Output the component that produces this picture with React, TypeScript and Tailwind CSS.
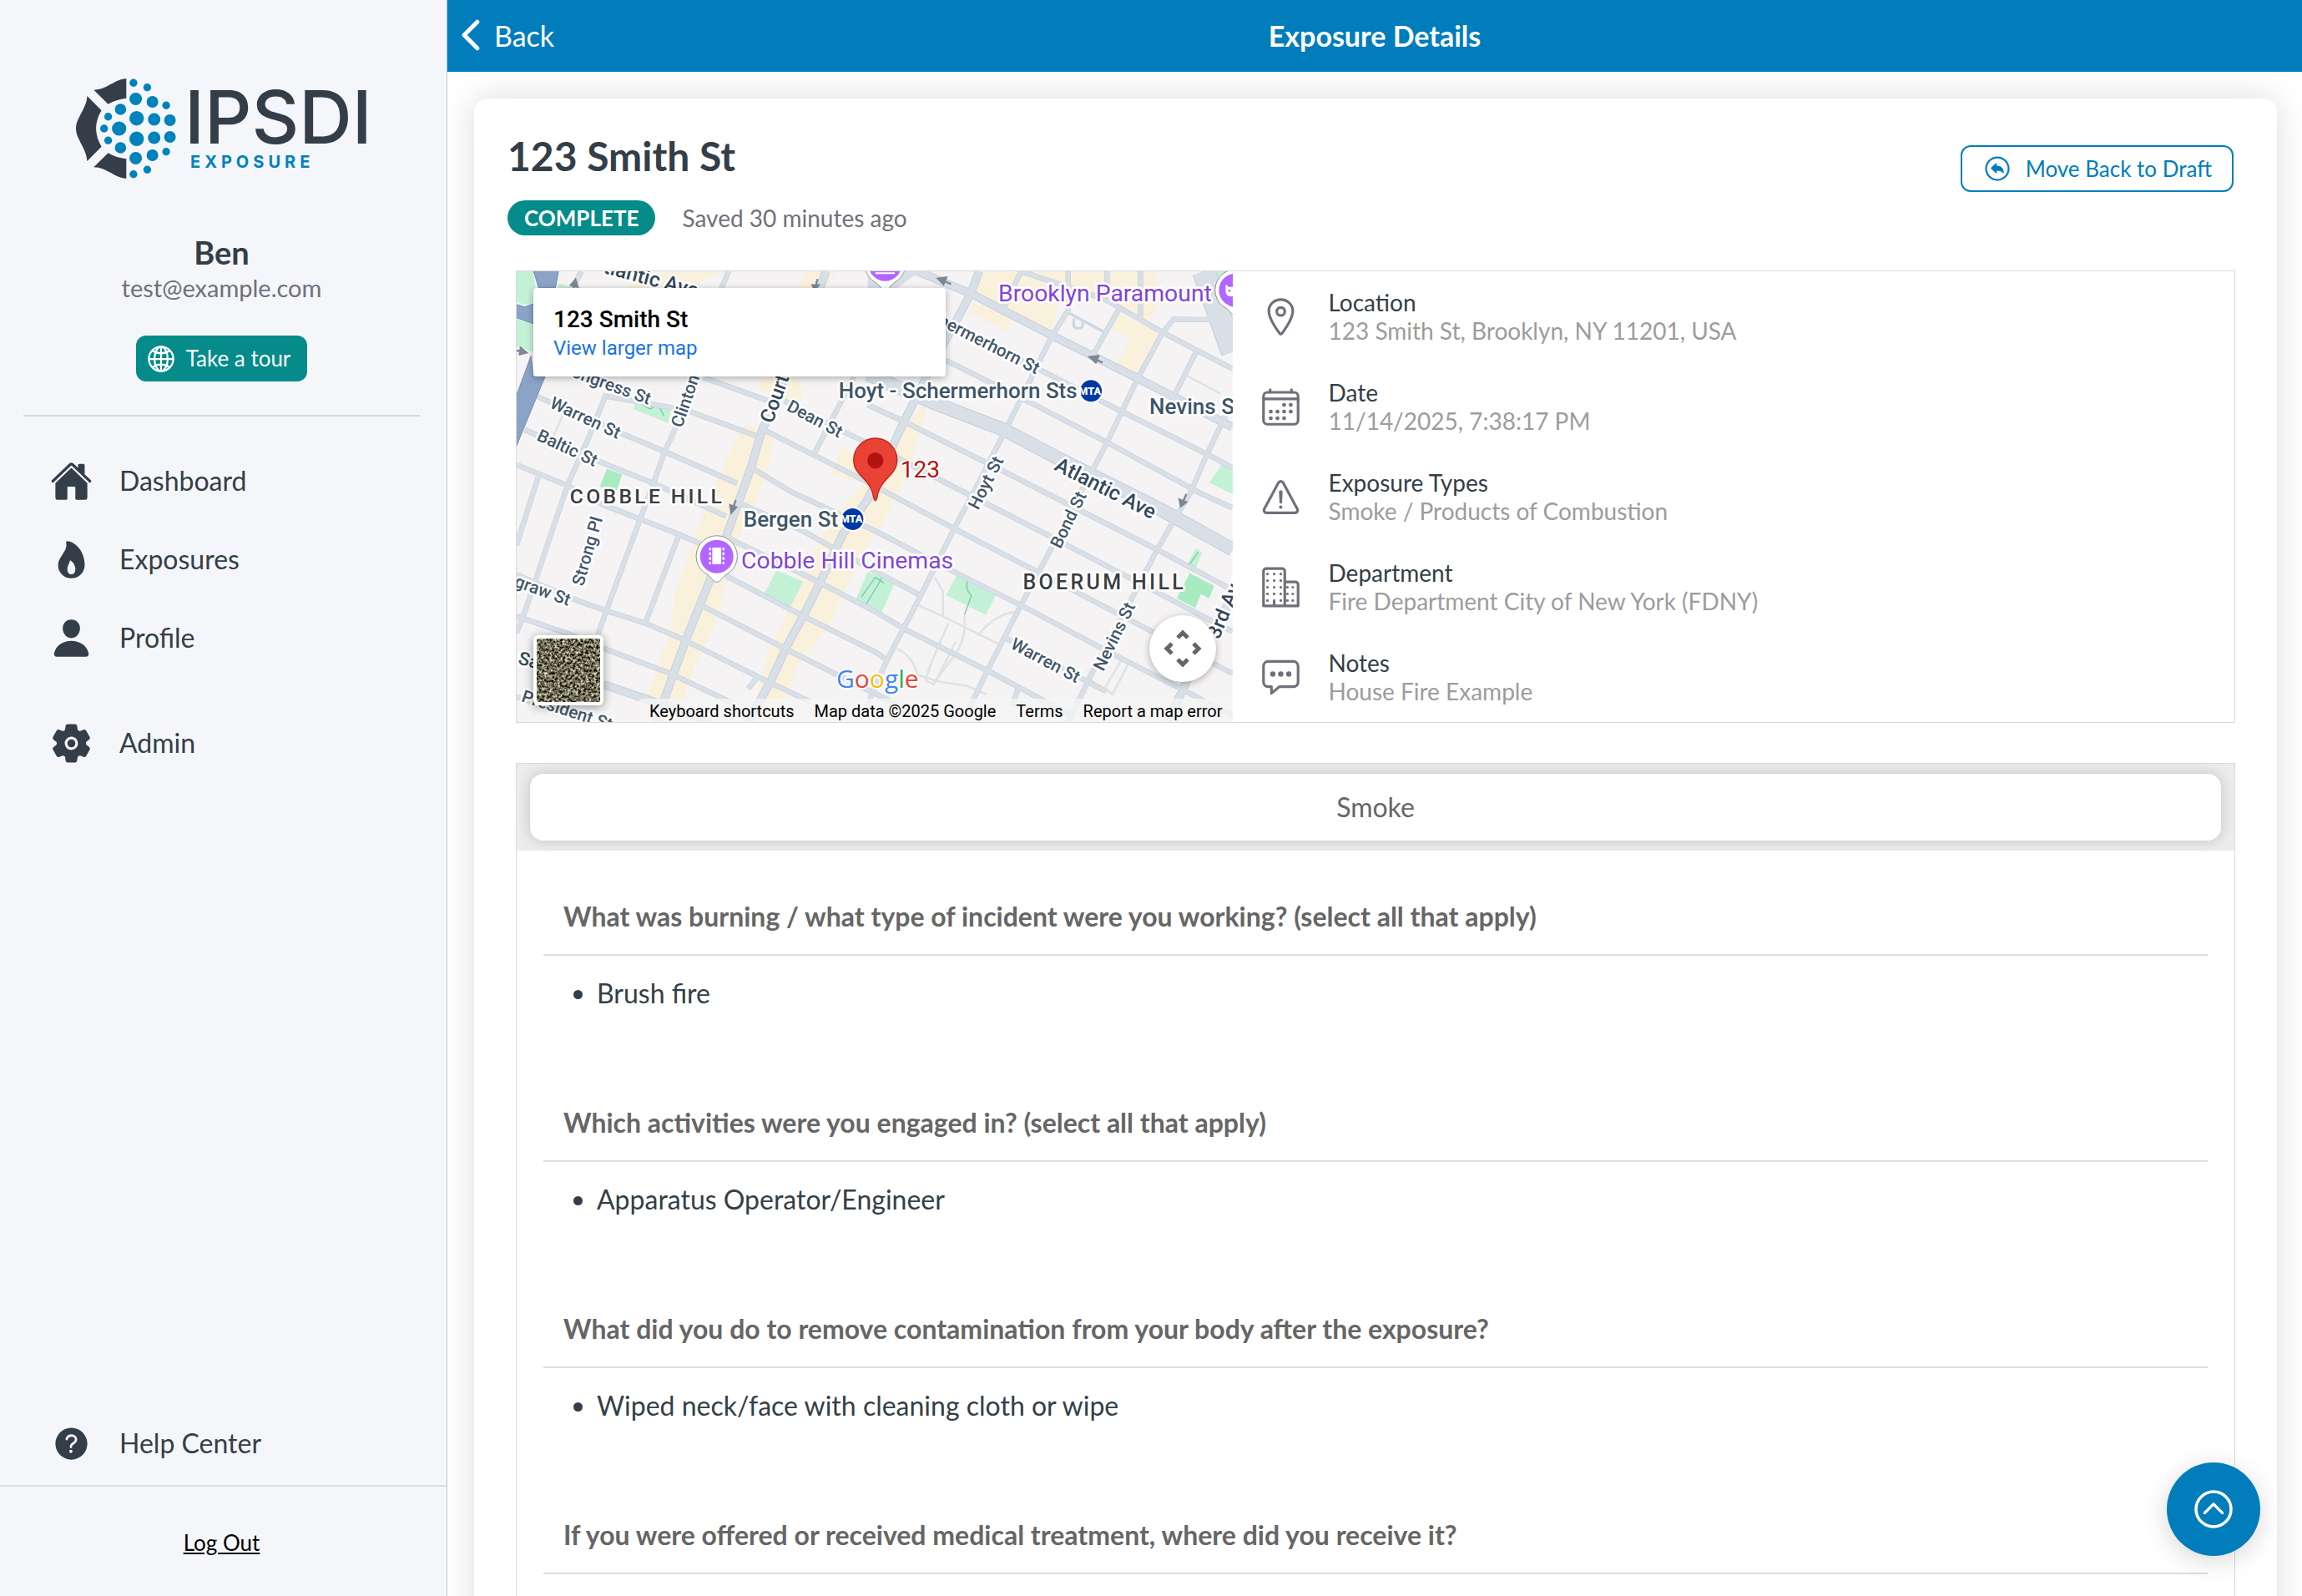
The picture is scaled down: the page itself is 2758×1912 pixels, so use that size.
import type { ReactNode } from 'react';
import type { IconType } from 'react-icons';
import {
  IoArrowUndoCircleOutline,
  IoBusinessOutline,
  IoCalendarOutline,
  IoChatboxEllipsesOutline,
  IoChevronBack,
  IoChevronUpCircleOutline,
  IoFlame,
  IoGlobeOutline,
  IoHelpCircle,
  IoHome,
  IoLocationOutline,
  IoPerson,
  IoSettings,
  IoWarningOutline,
} from 'react-icons/io5';

const mainLinks = [
  { name: 'Dashboard', href: '#dashboard', icon: IoHome },
  { name: 'Exposures', href: '#exposures', icon: IoFlame },
  { name: 'Profile', href: '#profile', icon: IoPerson },
];

const details = [
  { label: 'Location', value: '123 Smith St, Brooklyn, NY 11201, USA', icon: IoLocationOutline },
  { label: 'Date', value: '11/14/2025, 7:38:17 PM', icon: IoCalendarOutline },
  { label: 'Exposure Types', value: 'Smoke / Products of Combustion', icon: IoWarningOutline },
  { label: 'Department', value: 'Fire Department City of New York (FDNY)', icon: IoBusinessOutline },
  { label: 'Notes', value: 'House Fire Example', icon: IoChatboxEllipsesOutline },
];

const questions = [
  {
    text: 'What was burning / what type of incident were you working? (select all that apply)',
    answers: ['Brush fire'],
  },
  {
    text: 'Which activities were you engaged in? (select all that apply)',
    answers: ['Apparatus Operator/Engineer'],
  },
  {
    text: 'What did you do to remove contamination from your body after the exposure?',
    answers: ['Wiped neck/face with cleaning cloth or wipe'],
  },
  {
    text: 'If you were offered or received medical treatment, where did you receive it?',
    answers: [],
  },
];

// [cx, cy, r], the lower half is mirrored
const logoDots = [
  [68.9, 5.3, 4.7],
  [85.4, 10.7, 4.7],
  [71.6, 24.5, 7.5],
  [91.6, 28, 7],
  [108.1, 32.3, 4.7],
  [53.4, 37, 6.8],
  [72.7, 47.7, 8.7],
  [38.6, 45.7, 4.7],
  [93.7, 49, 7.5],
  [112.6, 50, 7],
];

function Logo() {
  return (
    <svg viewBox="0 0 350 120" className="h-[120px] w-[350px] overflow-visible" role="img" aria-label="IPSDI Exposure">
      <g fill="#343e48">
        <path d="M60.3 0V23.7Q48 25 38.6 30.7L21.3 13.7C37 13.5 45 1.5 60.3 0Z" />
        <path d="M60.3 120V96.3Q48 95 38.6 89.3L21.3 106.3C37 106.5 45 118.5 60.3 120Z" />
        <path d="M13.4 21L30.6 38.3Q17.6 60 30.6 81.7L13.4 99C13 84 0 73 0 60C0 47 13 36 13.4 21Z" />
      </g>
      <g fill="#0082ba">
        {logoDots.map(([x, y, r]) => (
          <g key={`${x}-${y}`}>
            <circle cx={x} cy={y} r={r} />
            <circle cx={x} cy={120 - y} r={r} />
          </g>
        ))}
        <circle cx="33.7" cy="60" r="4.7" />
        <circle cx="51.7" cy="60" r="8.6" />
      </g>
      <text x="130" y="78" fill="#343e48" className="font-['Inter',sans-serif] text-[88px] font-medium">
        IPSDI
      </text>
      <text x="137" y="107" fill="#0082ba" className="font-['Inter',sans-serif] text-[20px] font-bold tracking-[5px]">
        EXPOSURE
      </text>
    </svg>
  );
}

function NavLink({ name, href, icon: Icon }: { name: string; href: string; icon: IconType }) {
  return (
    <a href={href} className="flex h-[94px] items-center gap-8 pl-[60px] text-[32px] text-[#343e48]">
      <Icon size={51} />
      {name}
    </a>
  );
}

const localRoads = [
  // running down to the right
  'M673 382L903 465',
  'M963 465L1193 585L1293 632L1913 950L2573 1295',
  'M70 448L383 585L533 648L793 762',
  'M318 448L613 500L863 592',
  'M893 572L1068 660L1263 758L1573 925L1873 1080L2573 1445',
  'M843 705L983 790L1293 935L1513 1050L1813 1200L2123 1365L2573 1595',
  'M30 570L313 690L493 762L753 880',
  'M793 830L1033 935L1293 1080L1453 1165',
  'M0 695L183 770L313 840L443 890L583 945L663 980L763 1100L1023 1235L1293 1370L1328 1395',
  'M753 955L1083 1115L1293 1225L1393 1285L1693 1435L2003 1600',
  'M0 1090L223 1185L323 1220L463 1265L593 1320L903 1475L1053 1545',
  'M663 1200L973 1360L1273 1510L1453 1600',
  'M0 1240L193 1305L313 1355L563 1450L773 1550',
  'M1753 1315L2053 1475L2120 1510',
  'M1263 480L1393 540L1743 715L2303 1000L2573 1145',
  'M1543 320L1863 480L2123 615L2463 800L2573 850',
  'M1463 150L1903 365L2178 505L2478 655L2573 705',
  'M1813 0L2113 100L2323 220L2573 350',
  'M0 1530L200 1600',
  // running down to the left
  'M233 0L203 60',
  'M763 0L733 70',
  'M673 330L573 560L533 648L493 760L443 895L323 1220L293 1305',
  'M323 440L263 590L183 770L23 1245L0 1300',
  'M78 740L0 985',
  'M583 950L463 1265',
  'M1213 380L1068 660',
  'M1983 0V140L1923 235L1813 460L1743 600L1643 795L1573 925L1453 1165L1393 1280L1333 1395L1243 1600',
  'M2573 175L2363 172L2323 220L2233 385L2123 615L1883 1070L1813 1200L1693 1435L1623 1580',
  'M2573 470L2483 655L2423 795L2363 895L2303 1000L2223 1155L2063 1455L1983 1620',
  'M2443 290L2363 450',
  'M2163 140L2073 300',
  'M1813 0L1753 130',
  'M2123 0V80',
  'M2243 0L2243 170',
  'M873 1450L833 1500',
  'M1803 1500L1783 1560',
];

const mainRoads = [
  'M1113 0L973 370L883 570L843 705L753 955L693 1115L613 1315L563 1450L503 1620',
  'M1663 0L1633 80L1493 340L1393 540L1263 820L1173 945L1093 1115L1033 1235L973 1345L913 1475L833 1620',
  'M1440 0L1633 80L1923 230L2233 385L2573 560',
  'M313 1485L473 1540L700 1620',
  'M2573 1170L2500 1300L2413 1465L2340 1620',
];

const paths = [
  'M1503 1100L1533 1150V1240',
  'M1443 1200L1533 1240L1743 1345',
  'M1658 1310Q1720 1230 1793 1225',
  'M1368 1355Q1430 1390 1440 1450L1520 1475L1620 1490L1690 1520',
  'M1553 1265Q1490 1400 1470 1470L1500 1485L1580 1330',
  'M1610 1240Q1620 1330 1560 1400L1500 1480',
  'M2173 1400L2113 1500L2143 1520L2200 1410',
  'M2063 1470L2143 1520',
  'M130 600L170 510',
  'M2400 370L2530 440',
];

function StreetLabel({ x, y, angle, size = 62, color = '#42566b', children }: {
  x: number;
  y: number;
  angle: number;
  size?: number;
  color?: string;
  children: ReactNode;
}) {
  return (
    <text
      transform={`translate(${x} ${y}) rotate(${angle})`}
      fontSize={size}
      fontWeight={500}
      fill={color}
      stroke="#fff"
      strokeWidth={16}
      strokeLinejoin="round"
      paintOrder="stroke"
    >
      {children}
    </text>
  );
}

function TransitBadge({ x, y }: { x: number; y: number }) {
  return (
    <g>
      <circle cx={x} cy={y} r={45} fill="#fff" />
      <circle cx={x} cy={y} r={39} fill="#0039a6" />
      <text x={x - 4} y={y + 13} textAnchor="middle" fontSize={38} fontWeight={900} fill="#fff">
        MTA
      </text>
    </g>
  );
}

function MapPoi({ x, y, children }: { x: number; y: number; children?: ReactNode }) {
  return (
    <g transform={`translate(${x} ${y})`}>
      <path
        d="M0 92C-12 92 -18 78 -32 66A74 74 0 1 1 32 66C18 78 12 92 0 92Z"
        fill="#fff"
        stroke="#8a8f98"
        strokeWidth={3}
      />
      <circle r={60} fill="#b366ff" />
      {children}
    </g>
  );
}

function StreetMap() {
  return (
    <svg
      viewBox="0 0 2574 1620"
      preserveAspectRatio="xMidYMid slice"
      className="absolute inset-0 h-full w-full font-['Roboto',sans-serif]"
      aria-label="Map of 123 Smith St"
    >
      <rect width="2574" height="1620" fill="#f5f3f4" />

      {/* Commercial blocks */}
      <g fill="#f9f1dc">
        <path d="M520 0H740L620 60H390Z" />
        <path d="M1040 0H1150L1100 70H1010Z" />
        <path d="M890 370H1010L1030 460L980 470L870 420Z" />
        <path d="M820 550L925 590L910 690L860 830L800 960L760 1090L710 1280L640 1420L570 1620H440L500 1440L550 1300L570 1150L640 960L700 800L750 680Z" />
        <path d="M1170 630L1290 700L1390 560L1480 470L1420 690L1330 880L1200 1100L1120 1280L1010 1420L940 1620H840L900 1380L970 1230L1040 1060L1150 870L1250 760L1130 730Z" />
        <path d="M1680 0H2300V140L2260 180L2120 110L1960 80L1920 220L1650 90Z" />
        <path d="M1640 110L1780 160L1765 215L1630 150Z" />
        <path d="M2160 150L2310 220L2230 370L2160 330L2205 240L2130 200Z" />
      </g>

      {/* Parks */}
      <g fill="#c3f1d5">
        <path d="M0 0H60L75 110L30 120L0 110Z" />
        <path d="M0 170L60 190V290L0 270Z" />
        <path d="M150 45L215 60L205 80H150Z" />
        <path d="M430 465L555 500L545 545L420 495Z" />
        <path d="M325 710L380 730L360 790L300 775Z" fill="#a8ebc1" />
        <path d="M935 1075L1030 1115L985 1205L890 1160Z" />
        <path d="M1263 1080L1360 1120L1310 1230L1220 1180Z" />
        <path d="M1583 1090L1723 1165L1687 1235L1545 1165Z" />
        <path d="M2443 995L2465 1010L2440 1070L2410 1055Z" />
        <path d="M2420 1085L2508 1130L2490 1175L2460 1160L2440 1210L2373 1175Z" fill="#a8ebc1" />
        <path d="M2535 695L2574 710V800L2490 760Z" />
        <path d="M2490 0H2574V40L2520 50Z" />
      </g>
      <path d="M435 470L480 495L510 480L530 520M1255 1200L1315 1100M1240 1170L1290 1100L1320 1120M1623 1110Q1610 1140 1635 1165L1610 1235M2415 1060L2450 1010" fill="none" stroke="#7cc9b0" strokeWidth={4} />

      {/* Side streets, casing first */}
      <g fill="none" strokeLinejoin="round">
        {paths.map((d) => (
          <path key={d} d={d} stroke="#dfe3e5" strokeWidth={8} />
        ))}
        {localRoads.map((d) => (
          <path key={d} d={d} stroke="#c6d1db" strokeWidth={19} />
        ))}
        {mainRoads.map((d) => (
          <path key={d} d={d} stroke="#c0cdd8" strokeWidth={30} />
        ))}
        <path d="M2470 0L2574 290" stroke="#c0cdd8" strokeWidth={84} />
        <path d="M1263 370L1493 470L1753 570L1943 670L2323 860L2574 1000" stroke="#c0cdd8" strokeWidth={50} />
        {localRoads.map((d) => (
          <path key={d} d={d} stroke="#d8dfe7" strokeWidth={15} />
        ))}
        {mainRoads.map((d) => (
          <path key={d} d={d} stroke="#d8dfe7" strokeWidth={25} />
        ))}
        <path d="M2470 0L2574 290" stroke="#d8dfe7" strokeWidth={78} />
        <path d="M1263 370L1493 470L1753 570L1943 670L2323 860L2574 1000" stroke="#d8dfe7" strokeWidth={44} />
        <path d="M1263 0L1450 0L1330 90L1263 60" stroke="none" fill="#d8dfe7" />
        <path d="M1985 150L2115 220M2005 170Q1995 205 2020 205Q2040 205 2035 180" stroke="#cdd8e2" strokeWidth={10} />
      </g>

      {/* Expressway */}
      <g fill="#8ba3c6" stroke="#6f8db8" strokeWidth={3}>
        <path d="M60 -5H152L140 60H80Z" />
        <path d="M-5 118L30 128L65 115V190L-5 165Z" />
        <path d="M-5 460L52 305L60 378H103L-5 640Z" />
      </g>

      {/* One-way arrows */}
      <g fill="#7d8794" stroke="#7d8794" strokeWidth={7}>
        <path d="M1525 30L1562 46M1515 26L1545 22L1535 46Z" />
        <path d="M2070 312L2107 328M2060 308L2092 304L2082 328Z" />
        <path d="M788 822L778 855M768 840L790 848L772 868Z" />
        <path d="M2408 800L2395 830M2383 820L2407 830L2388 845Z" />
        <path d="M205 60L212 40M195 50L212 30L220 56Z" />
        <path d="M0 285L30 290M15 275L36 292L12 298Z" />
        <path d="M1082 28L1074 60M1064 50H1086L1072 66Z" />
      </g>

      <StreetLabel x={310} y={5} angle={15} size={74} color="#33475b">tlantic Ave</StreetLabel>
      <StreetLabel x={195} y={378} angle={20}>ongress St</StreetLabel>
      <StreetLabel x={116} y={488} angle={25}>Warren St</StreetLabel>
      <StreetLabel x={70} y={605} angle={25}>Baltic St</StreetLabel>
      <StreetLabel x={595} y={565} angle={-71}>Clinton St</StreetLabel>
      <StreetLabel x={920} y={550} angle={-70} size={72} color="#33475b">Court St</StreetLabel>
      <StreetLabel x={968} y={498} angle={28}>Dean St</StreetLabel>
      <StreetLabel x={1512} y={190} angle={27}>hermerhorn St</StreetLabel>
      <StreetLabel x={1660} y={860} angle={-63}>Hoyt St</StreetLabel>
      <StreetLabel x={1955} y={1000} angle={-64}>Bond St</StreetLabel>
      <StreetLabel x={1930} y={712} angle={27} size={74} color="#33475b">Atlantic Ave</StreetLabel>
      <StreetLabel x={240} y={1134} angle={-74}>Strong Pl</StreetLabel>
      <StreetLabel x={-42} y={1120} angle={20}>egraw St</StreetLabel>
      <StreetLabel x={3} y={1410} angle={15} size={66} color="#33475b">Sackett</StreetLabel>
      <StreetLabel x={15} y={1545} angle={18}>President St</StreetLabel>
      <StreetLabel x={1772} y={1353} angle={28}>Warren St</StreetLabel>
      <StreetLabel x={2110} y={1440} angle={-64}>Nevins St</StreetLabel>
      <StreetLabel x={2525} y={1325} angle={-67} size={72} color="#33475b">3rd Ave</StreetLabel>

      <StreetLabel x={192} y={833} angle={0} size={74} color="#3a3d42">
        <tspan letterSpacing={10}>COBBLE HILL</tspan>
      </StreetLabel>
      <StreetLabel x={1820} y={1142} angle={0} size={75} color="#3a3d42">
        <tspan letterSpacing={10}>BOERUM HILL</tspan>
      </StreetLabel>
      <StreetLabel x={1158} y={455} angle={0} size={78} color="#3d5569">Hoyt - Schermerhorn Sts</StreetLabel>
      <StreetLabel x={2275} y={512} angle={0} size={78} color="#3d5569">Nevins St</StreetLabel>
      <StreetLabel x={816} y={917} angle={0} size={78} color="#3d5569">Bergen St</StreetLabel>
      <TransitBadge x={2065} y={430} />
      <TransitBadge x={1208} y={891} />

      <g fontSize={85} fill="#8344d8" stroke="#fff" strokeWidth={16} strokeLinejoin="round" paintOrder="stroke">
        <text x={1732} y={108}>Brooklyn Paramount</text>
        <text x={808} y={1067}>Cobble Hill Cinemas</text>
      </g>
      <MapPoi x={720} y={1025}>
        <path d="M-24 -32V28M24 -32V28" stroke="#fff" strokeWidth={7} strokeDasharray="10 7" />
        <rect x={-16} y={-32} width={32} height={60} fill="#fff" />
      </MapPoi>
      <MapPoi x={1325} y={-25}>
        <path d="M-28 20H28M-35 32H35" stroke="#fff" strokeWidth={6} />
      </MapPoi>
      <MapPoi x={2585} y={68}>
        <path d="M-36 -20L-24 -12H0V22H-18Q-36 22 -36 0Z" fill="#fff" />
        <circle cx={-22} cy={2} r={4} fill="#b366ff" />
      </MapPoi>

      <path
        d="M1290 824C1284 824 1284 812 1280 796C1268 744 1212 734 1212 678A78 78 0 0 1 1368 678C1368 734 1312 744 1300 796C1296 812 1296 824 1290 824Z"
        fill="#ea4335"
        stroke="#c5221f"
        strokeWidth={4}
      />
      <circle cx={1290} cy={680} r={29} fill="#b31412" />
      <text x={1380} y={740} fontSize={84} fill="#b31412" stroke="#fff" strokeWidth={12} strokeLinejoin="round" paintOrder="stroke">
        123
      </text>
    </svg>
  );
}

function SatelliteThumb() {
  return (
    <svg viewBox="0 0 76 76" className="h-full w-full" aria-hidden="true">
      <filter id="aerial" x="0" y="0" width="100%" height="100%" colorInterpolationFilters="sRGB">
        <feTurbulence type="fractalNoise" baseFrequency="0.32" numOctaves="4" seed="7" />
        <feColorMatrix
          type="matrix"
          values="1.7 0 0 0 -0.42  1.7 0 0 0 -0.43  1.6 0 0 0 -0.46  0 0 0 0 1"
        />
      </filter>
      <rect width="76" height="76" filter="url(#aerial)" />
    </svg>
  );
}

function MapPanel() {
  return (
    <div className="relative col-span-5 h-[540px] overflow-hidden">
      <StreetMap />

      {/* Place card */}
      <div className="absolute top-5 left-5 h-[106px] w-[494px] rounded-sm bg-white px-6 pt-[22px] font-['Roboto',sans-serif] shadow-[0_2px_8px_rgba(0,0,0,0.3)]">
        <p className="text-[28px] leading-8 font-medium text-black">123 Smith St</p>
        <a href="#larger-map" className="block text-2xl leading-9 text-[#1a73e8]">
          View larger map
        </a>
      </div>

      <button
        aria-label="Show satellite imagery"
        className="absolute bottom-5 left-5 size-[84px] overflow-hidden rounded-md border-4 border-white shadow-[0_2px_12px_rgba(0,0,0,0.4)]"
      >
        <SatelliteThumb />
      </button>

      <button
        aria-label="Map camera controls"
        className="absolute right-5 bottom-12 flex size-20 items-center justify-center rounded-full bg-white shadow-[0_2px_8px_rgba(0,0,0,0.3)]"
      >
        <svg viewBox="0 0 48 48" className="size-12" fill="none" stroke="#666" strokeWidth="5">
          <path d="M18 11L24 5L30 11M18 37L24 43L30 37M11 18L5 24L11 30M37 18L43 24L37 30" />
        </svg>
      </button>

      <svg viewBox="0 0 96 40" className="absolute bottom-7 left-[383px] h-10 w-24 overflow-visible" aria-label="Google">
        <text
          x="0"
          y="27"
          fontSize="30"
          stroke="#fff"
          strokeWidth="4"
          strokeLinejoin="round"
          paintOrder="stroke"
          className="font-['Open_Sans',sans-serif] font-medium"
        >
          <tspan fill="#4285f4">G</tspan>
          <tspan fill="#ea4335">o</tspan>
          <tspan fill="#fbbc04">o</tspan>
          <tspan fill="#4285f4">g</tspan>
          <tspan fill="#34a853">l</tspan>
          <tspan fill="#ea4335">e</tspan>
        </text>
      </svg>

      <div className="absolute right-0 bottom-0 flex h-7 items-center gap-6 bg-[#f5f5f5]/75 px-3 pt-[2px] font-['Roboto',sans-serif] text-xl text-black">
        <button>Keyboard shortcuts</button>
        <span>Map data ©2025 Google</span>
        <a href="#terms">Terms</a>
        <a href="#report">Report a map error</a>
      </div>
    </div>
  );
}

function Sidebar() {
  return (
    <aside className="flex w-[536px] shrink-0 flex-col border-r border-[#c3c5c9] bg-[#f4f6fa]">
      <div className="flex flex-col items-center pt-[94px] pr-8 pl-7">
        <Logo />
        <h2 className="mt-[66px] text-[38px] leading-[44px] font-bold text-[#343e48]">Ben</h2>
        <p className="text-[29px] leading-[42px] text-[#6f707a]">test@example.com</p>
        <button className="mt-9 flex h-[55px] items-center gap-3 rounded-xl bg-[#048b8a] pr-5 pl-3 text-[26px] text-white">
          <IoGlobeOutline size={36} />
          Take a tour
        </button>
      </div>
      <hr className="mt-10 mr-8 ml-7 border-t-2 border-[#d5d7da]" />

      <nav className="mt-[30px] flex flex-col">
        {mainLinks.map((link) => (
          <NavLink key={link.name} {...link} />
        ))}
        <div className="mt-8">
          <NavLink name="Admin" href="#admin" icon={IoSettings} />
        </div>
      </nav>

      <div className="mt-auto mb-[3px]">
        <NavLink name="Help Center" href="#help" icon={IoHelpCircle} />
      </div>
      <div className="flex h-[133px] items-center justify-center border-t-2 border-[#dcdedf] pt-1 pr-1">
        <button className="text-[26px] text-black underline">Log Out</button>
      </div>
    </aside>
  );
}

export default function App() {
  return (
    <div className="flex h-screen overflow-hidden bg-white font-['Lato',sans-serif]">
      <Sidebar />

      <main className="flex min-w-0 flex-1 flex-col">
        <header className="grid h-[86px] shrink-0 grid-cols-3 items-center bg-[#007dba] pb-[2px] text-[34px] text-white">
          <button className="flex items-center justify-self-start">
            <IoChevronBack size={56} />
            Back
          </button>
          <h1 className="text-center font-bold">Exposure Details</h1>
        </header>

        <div className="min-h-0 flex-1 overflow-hidden pt-8 pr-[30px] pl-8">
          <div className="rounded-2xl bg-white px-[50px] pt-10 shadow-[0_0_40px_rgba(0,0,0,0.14)]">
            {/* TITLE ROW */}
            <div className="-ml-[10px] flex items-start justify-between">
              <div>
                <h2 className="text-5xl leading-[58px] font-bold text-[#343e48]">123 Smith St</h2>
                <div className="mt-6 flex items-center gap-8">
                  <span className="flex h-[42px] items-center rounded-full bg-[#048b8a] px-5 text-[26px] font-bold text-white">
                    COMPLETE
                  </span>
                  <span className="text-[28px] leading-[42px] text-[#6f707a]">Saved 30 minutes ago</span>
                </div>
              </div>
              <button className="mt-4 mr-[2px] flex h-14 items-center gap-4 rounded-xl border-2 border-[#007dba] px-6 text-[26px] text-[#007dba]">
                <IoArrowUndoCircleOutline size={36} />
                Move Back to Draft
              </button>
            </div>

            {/* MAP + DETAILS */}
            <section className="mt-[42px] grid grid-cols-12 border border-[#d9dbdc]">
              <MapPanel />
              <dl className="col-span-7 flex flex-col pl-8">
                {details.map(({ label, value, icon: Icon }) => (
                  <div key={label} className="flex flex-1 items-center gap-8">
                    <Icon size={51} className="text-[#6f707a]" />
                    <div className="text-[28px] leading-[34px]">
                      <dt className="text-[#343e48]">{label}</dt>
                      <dd className="text-[#9c9c9c]">{value}</dd>
                    </div>
                  </div>
                ))}
              </dl>
            </section>

            {/* ANSWERS */}
            <section className="mt-12 border border-[#d9dbdc]">
              <div className="bg-[#ececec] px-4 py-3">
                <button className="h-20 w-full rounded-2xl bg-white text-[32px] text-[#666] shadow-[0_0_16px_rgba(0,0,0,0.18)]">
                  Smoke
                </button>
              </div>
              <div className="px-8">
                {questions.map((question) => (
                  <div key={question.text} className="pt-[60px] pb-[57px] text-[32px] leading-[38px]">
                    <h3 className="border-b-2 border-[#dcdedf] px-6 pb-[26px] font-bold text-[#666]">{question.text}</h3>
                    <ul className="mt-[26px] list-disc pl-16 text-[#343e48]">
                      {question.answers.map((answer) => (
                        <li key={answer}>{answer}</li>
                      ))}
                    </ul>
                  </div>
                ))}
              </div>
            </section>
          </div>
        </div>
      </main>

      <button
        aria-label="Scroll to top"
        className="absolute right-[50px] bottom-12 flex size-28 items-center justify-center rounded-full bg-[#007dba] text-white shadow-[0_6px_30px_rgba(0,0,0,0.16)]"
      >
        <IoChevronUpCircleOutline size={56} />
      </button>
    </div>
  );
}
